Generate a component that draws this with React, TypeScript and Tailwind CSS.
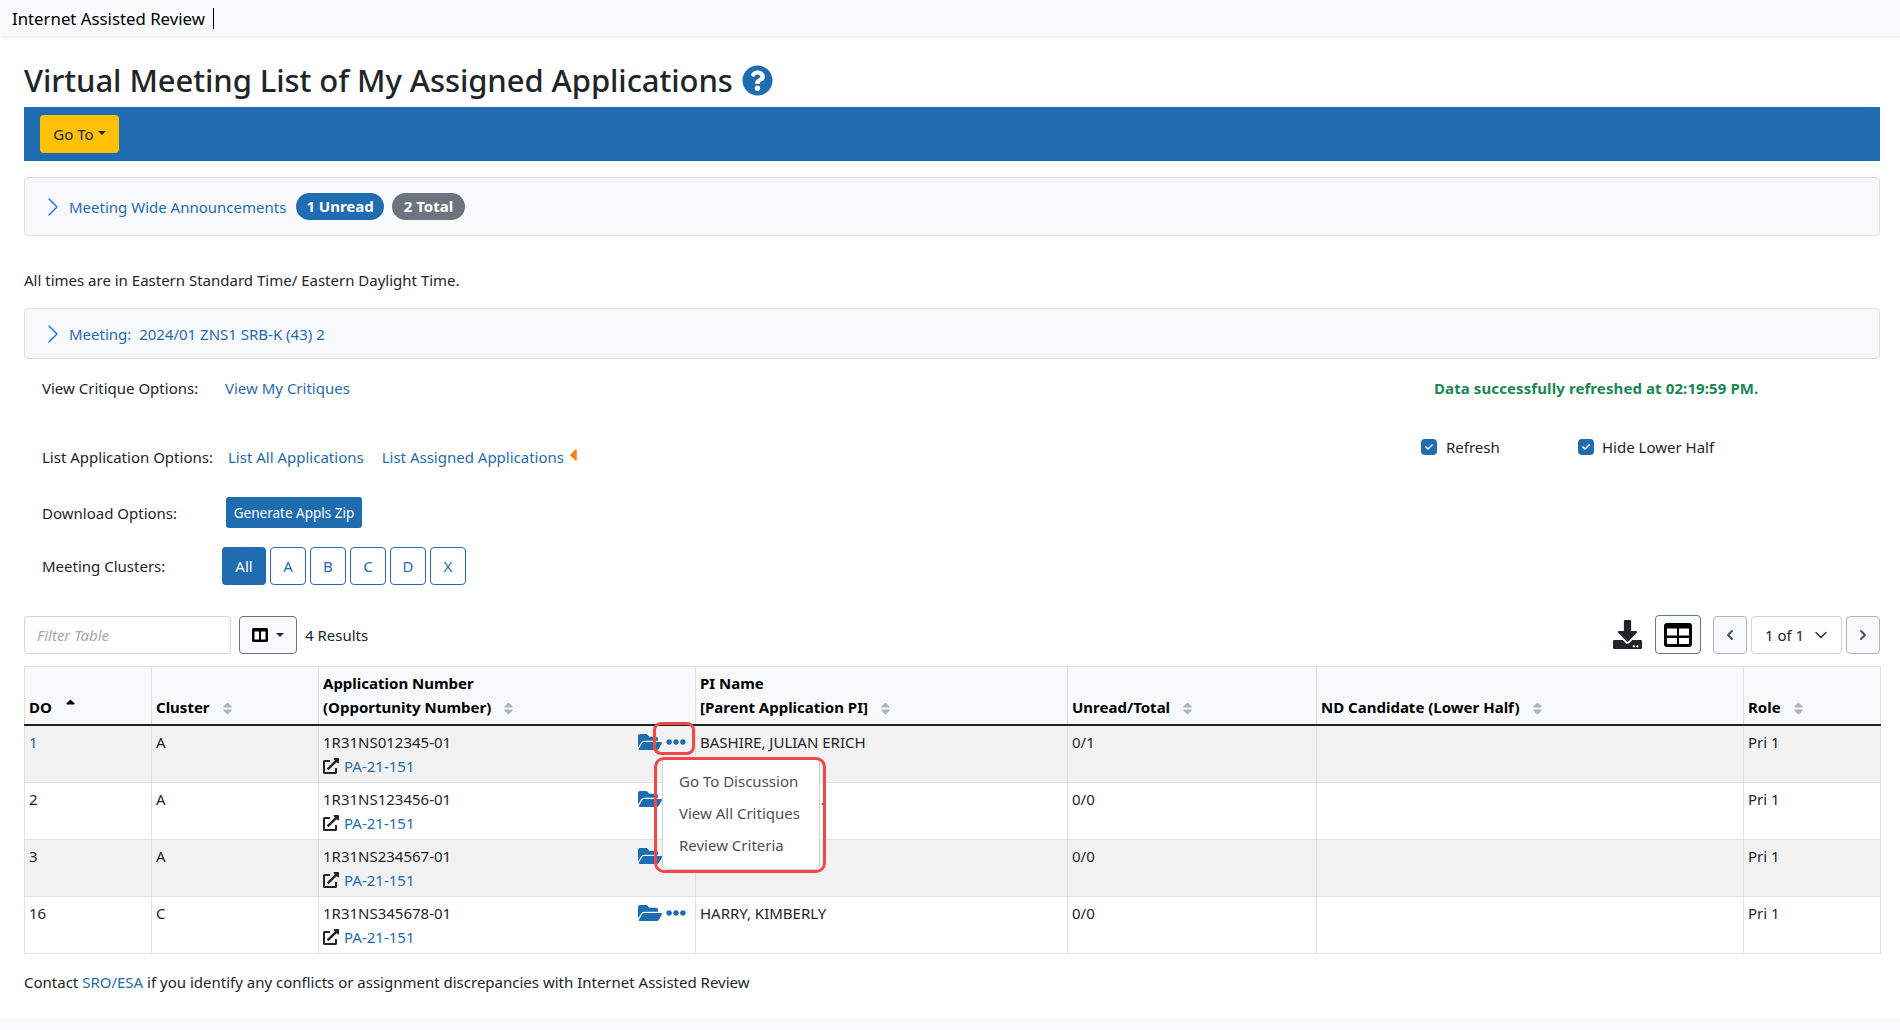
import { ChevronLeft, ChevronRight, ChevronDown } from "lucide-react";
import {
  FaQuestionCircle,
  FaFolderOpen,
  FaEllipsisH,
  FaExternalLinkAlt,
  FaSort,
  FaSortUp,
  FaCheck,
  FaDownload,
  FaCaretLeft,
} from "react-icons/fa";

const FONT = "font-['Noto_Sans',sans-serif]";
const link = "text-[#1f6cb0]";

const rows = [
  { d: "1", c: "A", app: "1R31NS012345-01", pi: "BASHIRE, JULIAN ERICH", ur: "0/1" },
  { d: "2", c: "A", app: "1R31NS123456-01", pi: "ABRAMS, DAVID J.", ur: "0/0" },
  { d: "3", c: "A", app: "1R31NS234567-01", pi: "LAMONT, ELAINE", ur: "0/0" },
  { d: "16", c: "C", app: "1R31NS345678-01", pi: "HARRY, KIMBERLY", ur: "0/0" },
];

const heads = [
  { w: "w-[127px]", lines: ["DO"], active: true },
  { w: "w-[167px]", lines: ["Cluster"] },
  { w: "w-[377px]", lines: ["Application Number", "(Opportunity Number)"] },
  { w: "w-[372px]", lines: ["PI Name", "[Parent Application PI]"] },
  { w: "w-[249px]", lines: ["Unread/Total"] },
  { w: "w-[427px]", lines: ["ND Candidate (Lower Half)"] },
  { w: "w-[137px]", lines: ["Role"] },
];

function SortIcon({ active }: { active?: boolean }) {
  if (active) return <FaSortUp className="relative -top-[3px] ml-[11px] inline text-[15px] text-black" />;
  return <FaSort className="ml-[10px] inline text-[15px] text-[#adb5bd]" />;
}

function Check() {
  return (
    <span className="flex h-4 w-4 items-center justify-center rounded-[4px] bg-[#1f6cb0]">
      <FaCheck className="text-[8px] text-white" />
    </span>
  );
}

function ColumnsIcon() {
  return (
    <svg width="16" height="14" viewBox="0 0 16 14">
      <rect x="0" y="0" width="16" height="14" rx="1.5" fill="#000" />
      <rect x="2.5" y="3.5" width="4.5" height="8" fill="#fff" />
      <rect x="9" y="3.5" width="4.5" height="8" fill="#fff" />
    </svg>
  );
}

function TableIcon() {
  return (
    <svg width="28" height="24" viewBox="0 0 28 24">
      <rect x="0" y="0" width="28" height="24" rx="3" fill="#000" />
      <rect x="3" y="5.5" width="10" height="7" fill="#fff" />
      <rect x="15" y="5.5" width="10" height="7" fill="#fff" />
      <rect x="3" y="15" width="10" height="6" fill="#fff" />
      <rect x="15" y="15" width="10" height="6" fill="#fff" />
    </svg>
  );
}

export default function App() {
  return (
    <div className={`${FONT} relative min-h-[1030px] bg-white text-[15px] leading-[24px] text-[#212529]`}>
      {/* navbar */}
      <div className="flex h-9 items-center bg-[#f8f9fa] pl-3 shadow-[0_1px_4px_rgba(0,0,0,0.1)]">
        <span className="border-r border-black pr-2 text-[16.8px] leading-[21px] text-black">Internet Assisted Review</span>
      </div>

      <div className="pr-5 pl-6">
        <div className="flex h-[71px] items-end pb-[7px]">
          <h1 className="text-[31px] leading-[40px] font-medium tracking-[-0.08px]">Virtual Meeting List of My Assigned Applications</h1>
          <FaQuestionCircle className="mb-[4px] ml-[9px] text-[31px] text-[#1f6cb0]" />
        </div>

        {/* blue toolbar */}
        <div className="flex h-[54px] items-center bg-[#1f6cb0] pl-4">
          <button className="flex h-[38px] w-[79px] items-center justify-center rounded-[4px] bg-[#ffc107] text-[15px] text-[#212529]">
            Go To
            <span className="mb-[2px] ml-1 h-0 w-0 border-x-[4px] border-t-[4px] border-x-transparent border-t-[#212529]" />
          </button>
        </div>

        {/* announcements */}
        <div className="mt-4 flex h-[59px] items-center rounded-[4px] border border-[#dfdfdf] bg-[#f8f9fa] pl-3">
          <ChevronRight className="h-8 w-8 text-[#1a6fe0]" strokeWidth={1} />
          <span className={link}>Meeting Wide Announcements</span>
          <span className="ml-[10px] rounded-full bg-[#1f6cb0] px-[10px] text-[15px] leading-[27px] font-bold text-white">1 Unread</span>
          <span className="ml-2 rounded-full bg-[#6c757d] px-[12px] text-[15px] leading-[27px] font-bold text-white">2 Total</span>
        </div>

        <p className="mt-[32px] leading-[24px]">All times are in Eastern Standard Time/ Eastern Daylight Time.</p>

        <div className="mt-[16px] flex h-[51px] items-center rounded-[4px] border border-[#dfdfdf] bg-[#f8f9fa] pl-3">
          <ChevronRight className="h-8 w-8 text-[#1a6fe0]" strokeWidth={1} />
          <span className={link}>Meeting:&nbsp; 2024/01 ZNS1 SRB-K (43) 2</span>
        </div>

        {/* options */}
        <div className="flex pl-[18px]">
          <div className="flex-1">
            <div className="mt-[17px] flex h-6 items-center">
              <span className="w-[183px]">View Critique Options:</span>
              <span className={link}>View My Critiques</span>
            </div>
            <div className="mt-[45px] flex h-6 items-center">
              <span className="w-[186px]">List Application Options:</span>
              <span className={link}>List All Applications</span>
              <span className={`ml-[18px] ${link}`}>List Assigned Applications</span>
              <FaCaretLeft className="mb-[4px] ml-[-1px] text-[20px] text-[#fd7e14]" />
            </div>
            <div className="mt-[28px] flex items-center">
              <span className="w-[184px]">Download Options:</span>
              <button className="h-[31px] w-[136px] rounded-[3px] bg-[#1f6cb0] text-[13.5px] text-white">Generate Appls Zip</button>
            </div>
            <div className="mt-[19px] flex items-center">
              <span className="w-[180px]">Meeting Clusters:</span>
              <button className="h-[38px] w-[44px] rounded-[4px] bg-[#1f6cb0] text-white">All</button>
              {["A", "B", "C", "D", "X"].map((c) => (
                <button key={c} className={`ml-[4px] h-[38px] w-[36px] rounded-[4px] border border-[#1f6cb0] ${link}`}>
                  {c}
                </button>
              ))}
            </div>
          </div>
          <div className="w-[446px]">
            <div className="mt-[17px] h-6 leading-6 font-bold tracking-[0.1px] text-[#198754]">
              Data successfully refreshed at 02:19:59 PM.
            </div>
            <div className="mt-[35px] -ml-[13px] flex">
              <span className="flex w-[157px] items-center">
                <Check />
                <span className="ml-[9px]">Refresh</span>
              </span>
              <span className="flex items-center">
                <Check />
                <span className="ml-[8px]">Hide Lower Half</span>
              </span>
            </div>
          </div>
        </div>

        {/* table tools */}
        <div className="mt-[30px] flex h-[39px] items-center">
          <div className="flex h-[38px] w-[207px] items-center rounded-[4px] border border-[#ced4da] pl-3 text-[15px] text-[#a5a9ad] italic">
            Filter Table
          </div>
          <button className="ml-2 flex h-[38px] w-[58px] items-center justify-center rounded-[4px] border border-[#6c757d] bg-[#f8f9fa]">
            <ColumnsIcon />
            <span className="ml-2 h-0 w-0 border-x-[4px] border-t-[4px] border-x-transparent border-t-[#212529]" />
          </button>
          <span className="ml-2">4 Results</span>
          <div className="ml-auto flex items-center">
            <FaDownload className="-ml-[1px] text-[29px] text-[#212529]" />
            <button className="ml-[13px] flex h-[39px] w-[46px] items-center justify-center rounded-[4px] border border-[#6c757d] bg-[#f8f9fa]">
              <TableIcon />
            </button>
            <button className="ml-3 flex h-[38px] w-[34px] items-center justify-center rounded-[4px] border border-[#adb5bd] bg-[#f8f9fa] text-[#495057]">
              <ChevronLeft className="h-4 w-4" strokeWidth={3} />
            </button>
            <div className="ml-1 flex h-[38px] w-[91px] items-center justify-between rounded-[4px] border border-[#ced4da] pr-[10px] pl-[13px]">
              1 of 1
              <ChevronDown className="h-5 w-5" strokeWidth={1.5} />
            </div>
            <button className="ml-1 flex h-[38px] w-[34px] items-center justify-center rounded-[4px] border border-[#adb5bd] bg-[#f8f9fa] text-[#495057]">
              <ChevronRight className="h-4 w-4" strokeWidth={3} />
            </button>
          </div>
        </div>

        {/* table */}
        <table className="mt-3 w-[1856px] table-fixed border-collapse">
          <thead>
            <tr className="h-[58px] border-b-2 border-[#212529] bg-[#f8f9fa]">
              {heads.map((h) => (
                <th
                  key={h.lines[0]}
                  className={`${h.w} border border-b-2 border-[#dee2e6] border-b-[#212529] px-1 pb-[5px] align-bottom text-left font-bold text-black`}
                >
                  {h.lines.map((l, i) => (
                    <div key={l}>
                      {l}
                      {i === h.lines.length - 1 && <SortIcon active={h.active} />}
                    </div>
                  ))}
                </th>
              ))}
            </tr>
          </thead>
          <tbody>
            {rows.map((r, i) => (
              <tr key={r.d} className={`${i === 0 ? "h-[58px]" : "h-[57px]"} ${i % 2 === 0 ? "bg-[#f2f2f2]" : "bg-white"}`}>
                <td className={`border border-[#dee2e6] px-1 pt-[4px] align-top ${i === 0 ? link : ""}`}>{r.d}</td>
                <td className="border border-[#dee2e6] px-1 pt-[4px] align-top">{r.c}</td>
                <td className="border border-[#dee2e6] px-1 pt-[4px] align-top">
                  <div className="flex items-center justify-between">
                    <span>{r.app}</span>
                    <span className="mr-[5px] flex items-center">
                      <FaFolderOpen className="text-[24px] text-[#1f6cb0]" />
                      <FaEllipsisH className="ml-[4px] text-[20px] text-[#1f6cb0]" />
                    </span>
                  </div>
                  <div className="flex items-center">
                    <FaExternalLinkAlt className="text-[16px] text-[#212529]" />
                    <span className={`ml-[5px] ${link}`}>PA-21-151</span>
                  </div>
                </td>
                <td className="border border-[#dee2e6] px-1 pt-[4px] align-top">{r.pi}</td>
                <td className="border border-[#dee2e6] px-1 pt-[4px] align-top">{r.ur}</td>
                <td className="border border-[#dee2e6] px-1 pt-[4px] align-top" />
                <td className="border border-[#dee2e6] px-1 pt-[4px] align-top">Pri 1</td>
              </tr>
            ))}
          </tbody>
        </table>

        <p className="mt-[16px]">
          Contact <span className={link}>SRO/ESA</span> if you identify any conflicts or assignment discrepancies with Internet Assisted Review
        </p>
      </div>

      <div className="absolute right-0 bottom-0 left-0 h-3 bg-[#f8f9fa]" />

      {/* open row menu with the red callouts */}
      <div className="absolute top-[722px] left-[653px] h-[33px] w-[42px] rounded-[8px] border-[3px] border-[#f44848]" />
      <div className="absolute top-[757px] left-[662px] flex h-[113px] w-[158px] flex-col gap-2 rounded-[6px] border border-[#d0d0d0] bg-white pt-[11px] pl-[16px] text-[15px] text-[#495057]">
        <span>Go To Discussion</span>
        <span>View All Critiques</span>
        <span>Review Criteria</span>
      </div>
      <div className="absolute top-[757px] left-[654px] h-[116px] w-[172px] rounded-[10px] border-[3px] border-[#f44848]" />
    </div>
  );
}
